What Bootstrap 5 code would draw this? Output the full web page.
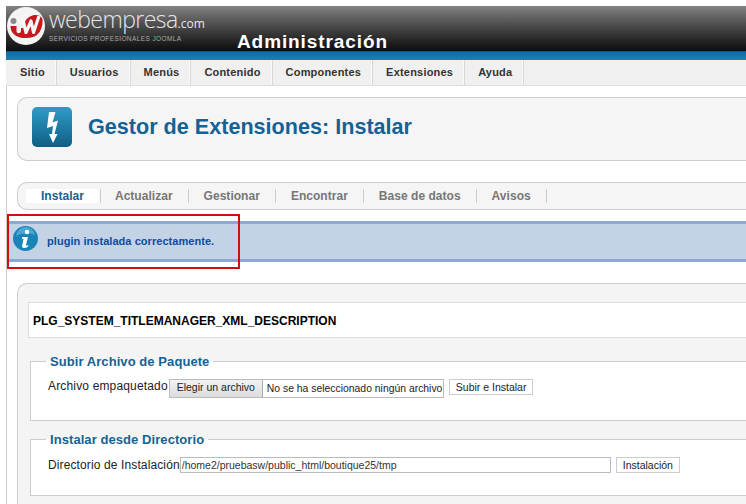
<!DOCTYPE html>
<html lang="es">
<head>
<meta charset="utf-8">
<title>Gestor de Extensiones</title>
<link rel="stylesheet" href="https://cdn.jsdelivr.net/npm/bootstrap@5.3.0/dist/css/bootstrap.min.css">
<style>
html,body{height:100%;overflow:hidden;background:#fff}
body{font-family:"Liberation Sans",Arial,sans-serif;font-size:12px;color:#222}
.page-shell{padding:6px 0 0 6px;width:746px;height:504px;overflow:hidden;position:relative}
.top-head{height:45px;background:linear-gradient(#838383,#555 35%,#1c1c1c 85%,#0d0d0d);position:relative}
.logo-mark{width:38px;height:38px;flex:none;margin:1px 0 0 1px}
.logo-words{margin:0 0 0 4px;color:#e6e6e6;width:188px}
.logo-main{font-family:"Open Sans",sans-serif;font-weight:300;font-size:23px;line-height:26px;letter-spacing:-.55px;white-space:nowrap;margin-top:0}
.logo-main span{font-size:12px;font-weight:400;letter-spacing:0;line-height:1}
.logo-sub{font-size:6.5px;letter-spacing:.4px;line-height:8px;color:#aaa;white-space:nowrap;margin-top:3px}
.admin-title{font-family:"Liberation Sans",sans-serif;font-weight:700;font-size:19px;letter-spacing:.9px;color:#fff;line-height:22px;margin:0 0 -2px 0;white-space:nowrap}
.blue-strip{height:9px;background:linear-gradient(#0e6da8,#1a80b8);border-top:1px solid #0a5b8f}
.menu-strip{height:26px;background:#f0f0f0;border-bottom:1px solid #ddd;margin:0;padding:0 0 0 1px;list-style:none}
.menu-strip li{padding:0 11px 0 13px;line-height:24px;font-weight:700;font-size:11px;letter-spacing:.2px;color:#333;border-right:1px solid #d8d8d8;box-shadow:inset -1px 0 0 #fafafa;height:25px}
.body-area{border-left:1px solid #ccc;padding:11px 0 0 10px;background:#fff;height:420px}
.title-box{height:64px;background:#f5f5f5;border:1px solid #ccc;border-right:0;border-radius:10px 0 0 10px;padding:0 0 4px 14px}
.title-icon{width:40px;height:40px;flex:none}
.title-text{font-size:21.6px;font-weight:700;color:#146295;margin:0 0 0 16px;line-height:26px;white-space:nowrap}
.tab-box{height:28px;margin-top:21px;background:#f5f5f5;border:1px solid #ccc;border-right:0;border-radius:10px 0 0 10px;padding-left:8px;list-style:none;margin-bottom:0}
.tab-box li{font-size:12px;font-weight:700;color:#777;letter-spacing:.03px;line-height:14px;height:14px;padding:0 15px;border-right:1px solid #ccc;white-space:nowrap}
.tab-box li.tab-on{background:#fff;color:#146295;padding:0 15px;border-right:0;margin-right:1px;box-shadow:1px 0 0 #f5f5f5,2px 0 0 #ccc}
.msg-band{height:41px;margin:11px 0 0 -10px;background:#c3d2e5;border-top:3px solid #8ea8d6;border-bottom:3px solid #8ea8d6;padding-left:6px}
.msg-icon{width:25px;height:25px;flex:none;margin-top:-6px}
.msg-text{font-size:11px;font-weight:700;color:#0b4da2;margin:-1px 0 0 9px;letter-spacing:.05px;white-space:nowrap}
.red-frame{position:absolute;left:7px;top:214px;width:233px;height:55px;border:2px solid #d40d12;pointer-events:none}
.work-panel{margin-top:21px;background:#f4f4f4;border:1px solid #ccc;border-right:0;border-radius:10px 0 0 0;padding:18px 0 0 10px;height:300px}
.desc-box{height:36px;background:#fff;border:1px solid #ddd;border-right:0;padding-left:4px;font-size:12px;font-weight:700;color:#000;line-height:36px;margin-bottom:14px}
.pack-set{background:#fff;border:1px solid #ccc;border-right:0;margin:0 0 9px 2px;padding:0 0 0 17px;min-width:0}
.pack-set legend{float:none;width:auto;font-size:13px;font-weight:700;color:#146295;line-height:16px;margin:0 0 9px -2px;padding:2px 4px 0;letter-spacing:.07px}
.set-a{height:69px}
.set-b{height:66px;margin-bottom:0}
.set-label{color:#222;font-size:12px;letter-spacing:.12px;white-space:nowrap}
.set-a .set-label{margin-top:-2px;letter-spacing:.16px}
.set-b .set-label{margin-top:-1px}
.file-pick{height:19px;border:1px solid #bbb;width:275px;background:#fff;margin-left:1px;font-size:10.4px;color:#222;white-space:nowrap;overflow:hidden}
.file-btn{height:19px;margin:-1px 4px 0 -1px;width:94px;padding:0;border:1px solid #aaa;background:linear-gradient(#f2f2f2,#dcdcdc);font-size:10.5px;color:#222;flex:none;box-sizing:border-box}
.go-btn{height:16px;padding:0 6px;margin-left:5px;border:1px solid #ccc;background:#fff;font-size:10.5px;line-height:14px;color:#222;white-space:nowrap}
.path-field{width:431px;height:16px;border:1px solid #bbb;padding:0 1px;font-family:"Liberation Sans",sans-serif;font-size:10.5px;color:#333;background:#fff;border-radius:0;outline:0}
</style>
</head>
<body>
<div class="page-shell">
  <div class="top-head d-flex align-items-start">
    <svg class="logo-mark" viewBox="0 0 38 38" aria-hidden="true">
      <circle cx="19" cy="19" r="19" fill="#f4f4f4"/>
      <circle cx="6.500" cy="14" r="3" fill="#8a8a8a"/>
      <path d="M3.500 19h6v5c0 3 4 3 4.500 0v-3h2c1-6 4-11 9.500-12.500 5-1.500 9 .5 10 3.500.5 8-2.500 15-8 17.500-6 2-12 2-17 0-4.500-2-7-5.500-7-10.500z" fill="#c8161d"/>
      <path d="M15.500 11 19 25.500 24 14l2.500 11.500L32 9" fill="none" stroke="#f7f7f7" stroke-width="3.200" stroke-linejoin="round"/>
    </svg>
    <div class="logo-words">
      <div class="logo-main">webempresa<span>.com</span></div>
      <div class="logo-sub">SERVICIOS PROFESIONALES JOOMLA</div>
    </div>
    <h1 class="admin-title align-self-end">Administración</h1>
  </div>
  <div class="blue-strip"></div>
  <ul class="menu-strip d-flex">
    <li>Sitio</li><li>Usuarios</li><li>Menús</li><li>Contenido</li><li>Componentes</li><li>Extensiones</li><li>Ayuda</li>
  </ul>
  <div class="body-area">
    <div class="title-box d-flex align-items-center">
      <svg class="title-icon" viewBox="0 0 40 40" aria-hidden="true">
        <defs><linearGradient id="bolt" x1="0" y1="0" x2="0" y2="1"><stop offset="0" stop-color="#2f9cc6"/><stop offset="1" stop-color="#0f5f85"/></linearGradient></defs>
        <rect x="0" y="0" width="40" height="40" rx="5" fill="url(#bolt)"/>
        <path d="M17 5H23.500L20.500 15.500L26 13.500L22.500 27H25.500L21 36L17 27H20L21 19L15 21Z" fill="#fff"/>
      </svg>
      <h2 class="title-text">Gestor de Extensiones: Instalar</h2>
    </div>
    <ul class="tab-box d-flex align-items-center">
      <li class="tab-on">Instalar</li><li>Actualizar</li><li>Gestionar</li><li>Encontrar</li><li>Base de datos</li><li>Avisos</li>
    </ul>
    <div class="msg-band d-flex align-items-center">
      <svg class="msg-icon" viewBox="0 0 25 25" aria-hidden="true">
        <circle cx="12.500" cy="12.500" r="12.500" fill="#1a84b8"/>
        <path d="M3 10c1-6 5-9 9.500-9S21 4 22 9c-6-2-13-2-19 1z" fill="#4aa6d2"/>
        <circle cx="14" cy="6" r="2.200" fill="#fff"/>
        <path d="M9 11h6l-2 8c0 1 1 1 2 0l.5 1c-2 2.500-6.500 3-6.500 0l1.500-7H9z" fill="#fff"/>
      </svg>
      <span class="msg-text">plugin instalada correctamente.</span>
    </div>
    <div class="work-panel">
      <div class="desc-box">PLG_SYSTEM_TITLEMANAGER_XML_DESCRIPTION</div>
      <fieldset class="pack-set set-a">
        <legend>Subir Archivo de Paquete</legend>
        <div class="d-flex align-items-start">
          <span class="set-label">Archivo empaquetado</span>
          <div class="file-pick d-flex align-items-center">
            <button type="button" class="file-btn">Elegir un archivo</button><span>No se ha seleccionado ningún archivo</span>
          </div>
          <button type="button" class="go-btn">Subir e Instalar</button>
        </div>
      </fieldset>
      <fieldset class="pack-set set-b">
        <legend>Instalar desde Directorio</legend>
        <div class="d-flex align-items-start">
          <span class="set-label">Directorio de Instalación</span>
          <input class="path-field" type="text" value="/home2/pruebasw/public_html/boutique25/tmp">
          <button type="button" class="go-btn">Instalación</button>
        </div>
      </fieldset>
    </div>
  </div>
  <div class="red-frame"></div>
</div>
<script src="https://cdn.jsdelivr.net/npm/bootstrap@5.3.0/dist/js/bootstrap.bundle.min.js"></script>
</body>
</html>
